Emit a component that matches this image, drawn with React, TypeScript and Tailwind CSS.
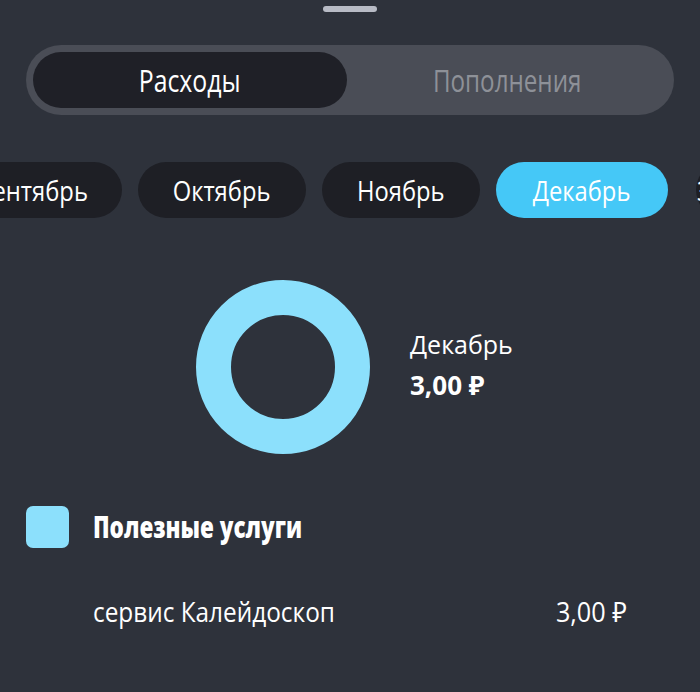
import React from 'react';

const months = [
  { name: 'Сентябрь', w: 'w-[186px]', cls: 'bg-[#1e1f25] justify-center pl-[8px]' },
  { name: 'Октябрь', w: 'w-[168px]', cls: 'bg-[#1e1f25] justify-center' },
  { name: 'Ноябрь', w: 'w-[158px]', cls: 'bg-[#1e1f25] justify-center' },
  { name: 'Декабрь', w: 'w-[172px]', cls: 'bg-[#45c8f7] justify-center' },
  { name: 'За год', w: 'w-[150px] ml-[12px]', cls: 'bg-[#1e1f25] justify-start pl-[1px]' },
];

export default function App() {
  return (
    <div
      className="w-[700px] h-[692px] overflow-hidden bg-[#2e323b] text-white"
      style={{ fontFamily: '"Open Sans", "Noto Sans", sans-serif' }}
    >
      {/* drag handle */}
      <div className="flex justify-center pt-[6px]">
        <div className="w-[54px] h-[6px] rounded-full bg-[#b8bbc5]" />
      </div>

      {/* segmented control */}
      <div className="mx-[26px] mt-[33px] h-[70px] rounded-full bg-[#4a4d56] p-[7px] flex">
        <div className="w-[314px] h-full rounded-full bg-[#1f2027] flex items-center justify-center">
          <span className="inline-block text-[31px] leading-none scale-x-[0.8]">Расходы</span>
        </div>
        <div className="flex-1 flex items-center justify-center">
          <span className="inline-block text-[31px] leading-none text-[#8e9198] scale-x-[0.78]">Пополнения</span>
        </div>
      </div>

      {/* months */}
      <div className="mt-[47px] flex gap-[16px] ml-[-64px]">
        {months.map((m) => (
          <div
            key={m.name}
            className={`${m.w} ${m.cls} shrink-0 h-[56px] rounded-full flex items-center`}
          >
            <span
              className={`inline-block text-[27px] leading-none scale-x-[0.88] ${
                m.name === 'За год' ? 'origin-left' : ''
              }`}
            >
              {m.name}
            </span>
          </div>
        ))}
      </div>

      {/* chart */}
      <div className="mt-[62px] flex items-center">
        <div className="ml-[196px] w-[174px] h-[174px] rounded-full border-[35px] border-[#8ce0fc]" />
        <div className="ml-[40px] mb-[5px] flex flex-col">
          <span className="text-[25px] leading-[41px]">Декабрь</span>
          <span className="text-[26px] leading-[41px] font-bold">3,00 ₽</span>
        </div>
      </div>

      {/* category */}
      <div className="mt-[52px] ml-[26px] flex items-center">
        <div className="w-[43px] h-[42px] rounded-[7px] bg-[#8ce0fc]" />
        <span className="ml-[24px] inline-block origin-left text-[30px] leading-none font-extrabold scale-x-[0.75]">
          Полезные услуги
        </span>
      </div>

      {/* item */}
      <div className="mt-[43px] h-[40px] ml-[93px] mr-[73px] flex items-center justify-between">
        <span className="inline-block origin-left text-[28px] leading-none scale-x-[0.87]">
          сервис Калейдоскоп
        </span>
        <span className="inline-block origin-right text-[28px] leading-none scale-x-[0.9]">3,00 ₽</span>
      </div>
    </div>
  );
}
